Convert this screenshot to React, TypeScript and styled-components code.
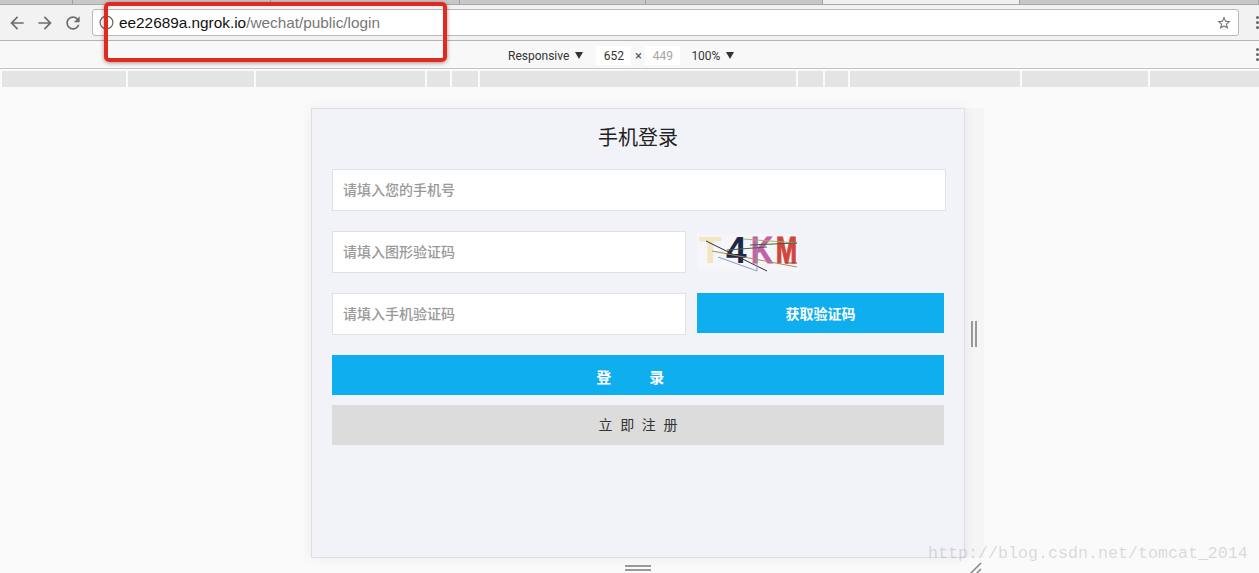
import React from "react";
import styled, { createGlobalStyle } from "styled-components";

const GlobalStyle = createGlobalStyle`
  html, body {
    margin: 0;
    padding: 0;
    background: #fafafa;
  }
  body {
    font-family: "Liberation Sans", "Noto Sans CJK SC", sans-serif;
  }
`;

const Page = styled.div`
  width: 1259px;
  height: 573px;
  position: relative;
  overflow: hidden;
  display: flex;
  flex-direction: column;
`;

const TabStrip = styled.div`
  height: 4px;
  display: flex;
  background: #f0f0f0;
  border-bottom: 1px solid #a8a8a8;
`;

const Tab = styled.div<{ $w: number; $on?: boolean }>`
  width: ${(p) => p.$w}px;
  background: ${(p) => (p.$on ? "#f0f0f0" : "#c8c8c8")};
  border-right: 1px solid #a0a0a0;
  box-sizing: border-box;
`;

const Toolbar = styled.div`
  height: 36px;
  display: flex;
  align-items: center;
  box-sizing: border-box;
  padding: 0 0 0 3px;
  background: #f2f2f2;
  border-bottom: 1px solid #b4b4b4;
`;

const NavButton = styled.div`
  width: 28px;
  height: 24px;
  display: flex;
  align-items: center;
  justify-content: center;
  color: #6e6e6e;
`;

const StarButton = styled(NavButton)`
  width: 16px;
`;

const AddressBar = styled.div`
  width: 1147px;
  height: 27px;
  margin-left: 5px;
  flex-shrink: 0;
  box-sizing: border-box;
  display: flex;
  align-items: center;
  padding: 0 6px 0 6px;
  background: #fff;
  border: 1px solid #b9b9b9;
  border-radius: 3px;
`;

const Url = styled.div`
  margin-left: 5px;
  flex: 1;
  font-family: "Liberation Sans", sans-serif;
  font-size: 15.35px;
  color: #777;
  white-space: nowrap;
`;

const Host = styled.span`
  color: #111;
`;

const Dots = styled.div`
  width: 3px;
  flex-shrink: 0;
  display: flex;
  flex-direction: column;
  gap: 2px;
  margin-left: 17px;
`;

const Dot = styled.span`
  width: 3px;
  height: 3px;
  border-radius: 50%;
  background: #666;
`;

const DeviceBar = styled.div`
  height: 28px;
  position: relative;
  display: flex;
  align-items: center;
  box-sizing: border-box;
  padding: 2px 0 0 508px;
  background: #f8f8f8;
  border-bottom: 1px solid #c4c4c4;
  font-family: Roboto, "Liberation Sans", sans-serif;
  font-size: 12px;
  color: #333;
`;

const Caret = styled.span`
  width: 0;
  height: 0;
  margin-left: 6px;
  border-left: 4px solid transparent;
  border-right: 4px solid transparent;
  border-top: 7px solid #333;
`;

const SizeBox = styled.span<{ $muted?: boolean }>`
  width: 35px;
  height: 19px;
  display: flex;
  align-items: center;
  justify-content: center;
  background: #fff;
  color: ${(p) => (p.$muted ? "#a4a4a4" : "#333")};
`;

const Times = styled.span`
  width: 14px;
  text-align: center;
  color: #555;
  font-size: 13px;
`;

const SizeGroup = styled.div`
  display: flex;
  align-items: center;
  margin-left: 13px;
  margin-right: 11px;
`;

const BarLabel = styled.span`
  white-space: nowrap;
`;

const BarDots = styled(Dots)`
  position: absolute;
  right: 0;
  top: 7px;
  margin: 0;
`;

const Ruler = styled.div`
  height: 18px;
  display: flex;
  gap: 2px;
  padding-left: 2px;
  padding-top: 2px;
  box-sizing: border-box;
  background: #fafafa;
`;

const RulerCell = styled.div<{ $w: number }>`
  width: ${(p) => p.$w}px;
  height: 16px;
  background: #e4e4e4;
`;

const Stage = styled.div`
  flex: 1;
  padding: 21px 0 0 311px;
  background: #fafafa;
`;

const Device = styled.div`
  width: 654px;
  height: 450px;
  position: relative;
  box-sizing: border-box;
  padding: 0 20px;
  background: #f2f3f8;
  border: 1px solid #dfdfe2;
  box-shadow: 0 0 12px rgba(0, 0, 0, 0.06), 19px 0 0 #f5f5f5;
`;

const Title = styled.h1`
  margin: 0;
  height: 60px;
  line-height: 58px;
  text-align: center;
  font-size: 20px;
  font-weight: 400;
  color: #222;
`;

const Form = styled.div`
  display: flex;
  flex-direction: column;
  gap: 20px;
`;

const Row = styled.div`
  display: flex;
  gap: 11px;
`;

const Field = styled.input<{ $half?: boolean }>`
  width: ${(p) => (p.$half ? "354px" : "614px")};
  height: 42px;
  box-sizing: border-box;
  padding: 0 10px;
  background: #fff;
  border: 1px solid #dfe1e6;
  outline: none;
  font-family: "Liberation Sans", "Noto Sans CJK SC", sans-serif;
  font-size: 14px;
  font-weight: 500;
  &::placeholder {
    color: #999;
    opacity: 1;
  }
`;

const Captcha = styled.svg`
  width: 101px;
  height: 37px;
  margin-top: 3px;
  overflow: visible;
  background: #f6f6fa;
`;

const CodeButton = styled.button`
  width: 247px;
  height: 40px;
  border: 0;
  padding: 0;
  background: #0eaeef;
  color: #fff;
  font-family: "Noto Sans CJK SC", sans-serif;
  font-size: 14px;
  font-weight: 700;
`;

const Actions = styled.div`
  display: flex;
  flex-direction: column;
  gap: 10px;
  margin-top: 20px;
`;

const LoginButton = styled.button`
  width: 612px;
  height: 40px;
  border: 0;
  padding: 2px 4px 0 0;
  background: #0eaeef;
  color: #fff;
  font-family: "Noto Sans CJK SC", sans-serif;
  font-size: 15px;
  font-weight: 700;
  letter-spacing: 11.5px;
`;

const RegisterButton = styled.button`
  width: 612px;
  height: 40px;
  border: 0;
  padding: 0 0 2px;
  background: #dcdcdc;
  color: #333;
  font-family: "Noto Sans CJK SC", sans-serif;
  font-size: 14px;
  word-spacing: 4.5px;
`;

const SideGrip = styled.div`
  position: absolute;
  left: 659px;
  top: 212px;
  width: 2px;
  height: 26px;
  border-left: 2px solid #999;
  border-right: 2px solid #999;
`;

const BottomGrip = styled.div`
  position: absolute;
  left: 313px;
  top: 456px;
  width: 26px;
  height: 2px;
  border-top: 2px solid #999;
  border-bottom: 2px solid #999;
`;

const CornerGrip = styled.svg`
  position: absolute;
  left: 655px;
  top: 452px;
  width: 16px;
  height: 16px;
`;

const Annotation = styled.div`
  position: absolute;
  left: 104px;
  top: 2px;
  width: 343px;
  height: 60px;
  box-sizing: border-box;
  border: 4px solid #de2a1f;
  border-radius: 5px;
  box-shadow: 0 1px 4px rgba(90, 0, 0, 0.45);
`;

const Watermark = styled.div`
  position: absolute;
  left: 928px;
  top: 544px;
  font-family: "Liberation Mono", monospace;
  font-size: 16.67px;
  color: rgba(120, 120, 120, 0.26);
  white-space: nowrap;
`;

const MaterialIcon = ({ d, size = 20 }: { d: string; size?: number }) => (
  <svg width={size} height={size} viewBox="0 0 24 24" fill="currentColor">
    <path d={d} />
  </svg>
);

const ICONS = {
  back: "M20 11H7.83l5.59-5.59L12 4l-8 8 8 8 1.41-1.41L7.83 13H20v-2z",
  forward: "M12 4l-1.41 1.41L16.17 11H4v2h12.17l-5.58 5.59L12 20l8-8z",
  reload:
    "M17.65 6.35C16.2 4.9 14.21 4 12 4c-4.42 0-7.99 3.58-7.99 8s3.57 8 7.99 8c3.73 0 6.84-2.55 7.73-6h-2.08c-.82 2.33-3.04 4-5.65 4-3.31 0-6-2.69-6-6s2.69-6 6-6c1.66 0 3.14.69 4.22 1.78L13 11h7V4l-2.35 2.35z",
  star: "M22 9.24l-7.19-.62L12 2 9.19 8.63 2 9.24l5.46 4.73L5.82 21 12 17.27 18.18 21l-1.63-7.03L22 9.24zM12 15.4l-3.76 2.27 1-4.28-3.32-2.88 4.38-.38L12 6.1l1.71 4.04 4.38.38-3.32 2.88 1 4.28L12 15.4z",
};

const rulerWidths = [124, 126, 169, 23, 26, 316, 25, 23, 170, 126, 109];
const tabWidths = [73, 198, 189, 186, 177, 197, 239];

function InfoIcon() {
  return (
    <svg width="15" height="15" viewBox="0 0 15 15" fill="none" stroke="#666">
      <circle cx="7.5" cy="7.5" r="6.4" strokeWidth="1.2" />
      <path d="M7.5 6.5v4.2M7.5 4v1.4" strokeWidth="1.3" />
    </svg>
  );
}

function CaptchaImage() {
  return (
    <Captcha viewBox="0 0 101 37">
      <g fontFamily="Liberation Sans, sans-serif" fontWeight="700" fontSize="37">
        <text x="2" y="29" fill="#f0e6c2">T</text>
        <text x="29" y="29" fill="#1c2848">4</text>
        <text x="54" y="29" fill="#c55fa8" stroke="#c55fa8" strokeWidth="0.8" textLength="22" lengthAdjust="spacingAndGlyphs">K</text>
        <text x="79" y="29" fill="#d2453c" stroke="#d2453c" strokeWidth="1.2" textLength="21" lengthAdjust="spacingAndGlyphs">M</text>
      </g>
      <g fill="none" strokeWidth="1">
        <path d="M9 7L70 37" stroke="#3a2a3a" />
        <path d="M21 23L60 37 60 6" stroke="#8e9ac0" />
        <path d="M15 17L100 33" stroke="#a58f55" />
        <path d="M46 5L100 9" stroke="#a8b060" />
        <path d="M53 11L100 9" stroke="#3f5f46" />
        <path d="M30 16L70 13" stroke="#4a5f46" />
        <path d="M88 29L100 29" stroke="#a03030" />
      </g>
    </Captcha>
  );
}

function App() {
  return (
    <Page>
      <GlobalStyle />
      <TabStrip>
        {tabWidths.map((w, i) => (
          <Tab key={i} $w={w} $on={i === 5} />
        ))}
      </TabStrip>
      <Toolbar>
        <NavButton>
          <MaterialIcon d={ICONS.back} />
        </NavButton>
        <NavButton>
          <MaterialIcon d={ICONS.forward} />
        </NavButton>
        <NavButton>
          <MaterialIcon d={ICONS.reload} />
        </NavButton>
        <AddressBar>
          <InfoIcon />
          <Url>
            <Host>ee22689a.ngrok.io</Host>/wechat/public/login
          </Url>
          <StarButton>
            <MaterialIcon d={ICONS.star} size={18} />
          </StarButton>
        </AddressBar>
        <Dots>
          <Dot />
          <Dot />
          <Dot />
        </Dots>
      </Toolbar>
      <DeviceBar>
        <BarLabel>Responsive</BarLabel>
        <Caret />
        <SizeGroup>
          <SizeBox>652</SizeBox>
          <Times>×</Times>
          <SizeBox $muted>449</SizeBox>
        </SizeGroup>
        <BarLabel>100%</BarLabel>
        <Caret />
        <BarDots>
          <Dot />
          <Dot />
          <Dot />
        </BarDots>
      </DeviceBar>
      <Ruler>
        {rulerWidths.map((w, i) => (
          <RulerCell key={i} $w={w} />
        ))}
      </Ruler>
      <Stage>
        <Device>
          <Title>手机登录</Title>
          <Form>
            <Field placeholder="请填入您的手机号" />
            <Row>
              <Field $half placeholder="请填入图形验证码" />
              <CaptchaImage />
            </Row>
            <Row>
              <Field $half placeholder="请填入手机验证码" />
              <CodeButton>获取验证码</CodeButton>
            </Row>
          </Form>
          <Actions>
            <LoginButton>登　录</LoginButton>
            <RegisterButton>立 即 注 册</RegisterButton>
          </Actions>
          <SideGrip />
          <BottomGrip />
          <CornerGrip viewBox="0 0 16 16">
            <path d="M1 15L14 2M7 15L14 8" stroke="#888" strokeWidth="1.5" />
          </CornerGrip>
        </Device>
      </Stage>
      <Annotation />
      <Watermark>http://blog.csdn.net/tomcat_2014</Watermark>
    </Page>
  );
}

export default App;
